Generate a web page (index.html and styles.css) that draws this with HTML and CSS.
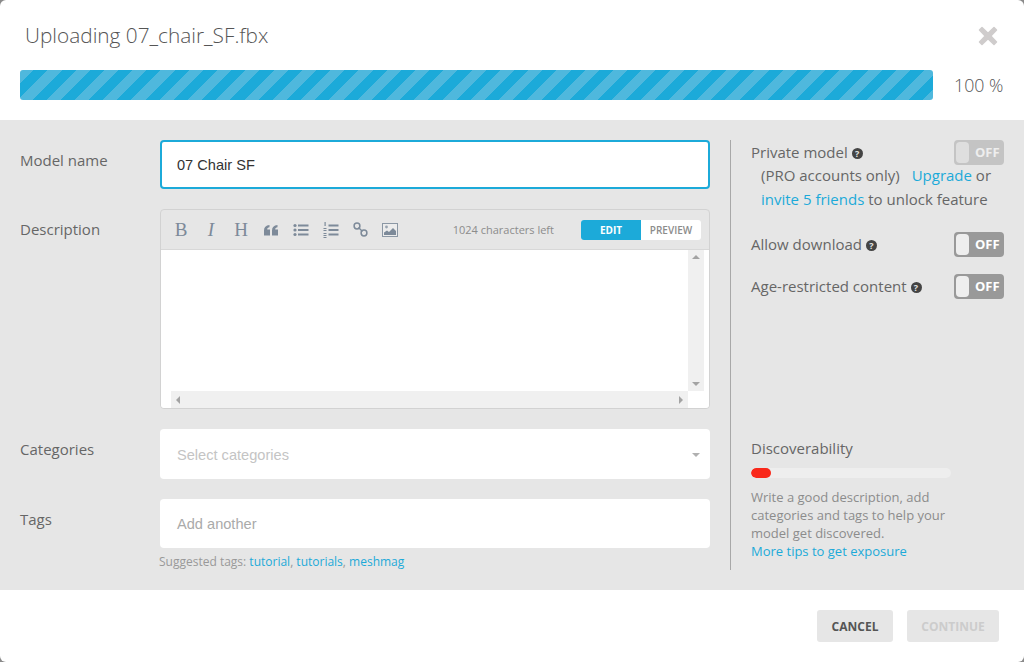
FILE: index.html
```html
<!DOCTYPE html>
<html lang="en">
<head>
<meta charset="utf-8">
<title>Upload</title>
<link rel="stylesheet" href="styles.css">
</head>
<body>
<div class="modal">
  <header class="head">
    <div class="title-row">
      <h1 class="title">Uploading 07_chair_SF.fbx</h1>
      <svg class="close" width="20" height="20" viewBox="0 0 20 20"><path d="M4 1.500 10 7.200 16 1.500 18.500 4 12.800 10 18.500 16 16 18.500 10 12.800 4 18.500 1.500 16 7.200 10 1.500 4Z" fill="#cfcccc" stroke="#cfcccc" stroke-width="1.500" stroke-linejoin="round"/></svg>
    </div>
    <div class="progress-row">
      <div class="progress"></div>
      <span class="percent">100 %</span>
    </div>
  </header>
  <main class="content">
    <section class="left">
      <div class="row row-name">
        <label class="label">Model name</label>
        <div class="name-input">07 Chair SF</div>
      </div>
      <div class="row row-desc">
        <label class="label">Description</label>
        <div class="editor">
          <div class="toolbar">
            <span class="tool tool-b">B</span>
            <span class="tool tool-i">I</span>
            <span class="tool tool-h">H</span>
            <svg class="ico" width="16" height="14" viewBox="0 0 16 14"><path d="M1 12.500V7.500C1 4.300 2.800 2.300 6.500 2V4.300C5 4.500 4.200 5.200 4.200 6.500H7V12.500ZM9 12.500V7.500C9 4.300 10.800 2.300 14.500 2V4.300C13 4.500 12.200 5.200 12.200 6.500H15V12.500Z" fill="#7d8a99"/></svg>
            <svg class="ico" width="16" height="14" viewBox="0 0 16 14"><g fill="#7d8a99"><circle cx="2" cy="2.500" r="1.600"/><circle cx="2" cy="7" r="1.600"/><circle cx="2" cy="11.500" r="1.600"/><rect x="5" y="1.500" width="10.500" height="2"/><rect x="5" y="6" width="10.500" height="2"/><rect x="5" y="10.500" width="10.500" height="2"/></g></svg>
            <svg class="ico" width="16" height="18" viewBox="0 0 16 18"><g fill="#7d8a99"><rect x="5.500" y="3.500" width="10" height="2"/><rect x="5.500" y="8" width="10" height="2"/><rect x="5.500" y="12.500" width="10" height="2"/><rect x="1.500" y="1" width="1.200" height="4"/><rect x="0.500" y="7" width="3" height="1"/><rect x="0.500" y="9" width="3" height="1"/><rect x="0.500" y="12" width="3" height="1"/><rect x="0.500" y="14" width="3" height="1"/><rect x="0.500" y="16" width="3" height="1"/></g></svg>
            <svg class="ico" width="15" height="15" viewBox="0 0 15 15"><g fill="none" stroke="#7d8a99" stroke-width="1.500"><circle cx="4" cy="4" r="2.900"/><circle cx="11" cy="11" r="2.900"/><path d="M5.500 5.500 9.500 9.500"/></g></svg>
            <svg class="ico" width="16" height="14" viewBox="0 0 16 14"><rect x="0.500" y="0.500" width="15" height="13" fill="#ececec" stroke="#8b97a4" stroke-width="1"/><path d="M2 12V9.500L5 7.500 7 9 11 5 14 8V12Z" fill="#7d8a99"/><circle cx="4.500" cy="4" r="1.400" fill="#98a3af"/></svg>
            <span class="chars">1024 characters left</span>
            <div class="switch"><span class="sw-edit">EDIT</span><span class="sw-preview">PREVIEW</span></div>
          </div>
          <div class="edit-area">
            <div class="edit-main">
              <div class="edit-text"></div>
              <div class="vscroll"><i class="arrow arrow-up"></i><i class="arrow arrow-down"></i></div>
            </div>
            <div class="hscroll-row">
              <div class="hscroll"><i class="arrow arrow-left"></i><i class="arrow arrow-right"></i></div>
            </div>
          </div>
        </div>
      </div>
      <div class="row row-cat">
        <label class="label">Categories</label>
        <div class="select"><span>Select categories</span><i class="select-arrow"></i></div>
      </div>
      <div class="row row-tags">
        <label class="label">Tags</label>
        <div class="tags-col">
          <div class="tags-input">Add another</div>
          <div class="suggest">Suggested tags: <a>tutorial</a>, <a>tutorials</a>, <a>meshmag</a></div>
        </div>
      </div>
    </section>
    <aside class="right">
      <div class="options">
        <div class="opt opt-private">
          <div class="opt-text">
            <div class="opt-title">Private model <span class="help">?</span></div>
            <div class="opt-note">(PRO accounts only) <a class="upgrade">Upgrade</a> or</div>
            <div class="opt-note opt-note2"><a>invite 5 friends</a> to unlock feature</div>
          </div>
          <div class="toggle toggle-dis"><i class="knob"></i><span>OFF</span></div>
        </div>
        <div class="opt opt-dl">
          <div class="opt-title">Allow download <span class="help">?</span></div>
          <div class="toggle"><i class="knob"></i><span>OFF</span></div>
        </div>
        <div class="opt opt-age">
          <div class="opt-title">Age-restricted content <span class="help">?</span></div>
          <div class="toggle"><i class="knob"></i><span>OFF</span></div>
        </div>
      </div>
      <div class="disc">
        <div class="disc-title">Discoverability</div>
        <div class="meter"><div class="meter-fill"></div></div>
        <p class="disc-text">Write a good description, add categories and tags to help your model get discovered.<br><a>More tips to get exposure</a></p>
      </div>
    </aside>
  </main>
  <footer class="foot">
    <button class="btn btn-cancel">CANCEL</button>
    <button class="btn btn-continue">CONTINUE</button>
  </footer>
</div>
</body>
</html>
```
FILE: styles.css
```css
* { box-sizing: border-box; }
html, body { margin: 0; padding: 0; height: 662px; background: #8a8a8a; overflow: hidden; }
body { font-family: "Open Sans", sans-serif; color: #666; }
a { color: #1caad9; }
.modal { width: 1024px; height: 662px; background: #fff; border-radius: 6px; overflow: hidden; display: flex; flex-direction: column; }
.head { height: 120px; padding: 0 20px; }
.title-row { height: 70px; display: flex; align-items: center; justify-content: space-between; padding: 1px 5px 0 5px; }
.title { margin: -1px 0 0; font-size: 20.800px; font-weight: 300; color: #555; line-height: 69px; }
.close { display: block; margin-right: 1px; }
.progress-row { display: flex; align-items: center; height: 30px; }
.progress { width: 913px; height: 30px; border-radius: 3px; background: repeating-linear-gradient(-45deg, #4fb8dd -2.900px, #4fb8dd 7.100px, #1caad9 7.100px, #1caad9 17.100px); }
.percent { margin-left: 21px; font-size: 17.800px; font-weight: 300; color: #555; }
.content { height: 470px; background: #e6e6e6; padding: 20px; display: flex; }
.left { width: 690px; display: flex; flex-direction: column; gap: 20px; }
.row { display: flex; }
.label { width: 140px; font-size: 15px; color: #666; line-height: 20px; padding-top: 10px; flex: none; }
.name-input { width: 550px; height: 49px; background: #fff; border: 2px solid #1caad9; border-radius: 4px; padding: 1px 15px 0; font: 14.600px/45px "Liberation Sans", sans-serif; color: #333; }
.editor { width: 550px; height: 200px; border: 1px solid #d2d2d2; border-radius: 4px; overflow: hidden; }
.toolbar { height: 40px; border-bottom: 1px solid #d8d8d8; display: flex; align-items: center; padding-left: 12px; position: relative; }
.tool { width: 16px; font: 19px/20px "Liberation Serif", serif; color: #7d8a99; text-align: center; margin-right: 14px; }
.tool-i { font-style: italic; }
.ico { margin-right: 14px; flex: none; }
.chars { margin-left: auto; font-size: 11px; color: #8c8c8c; margin-right: 27px; }
.switch { display: flex; width: 120px; height: 20px; margin-right: 8px; border-radius: 3px; overflow: hidden; background: #fff; }
.sw-edit { width: 60px; background: #1caad9; color: #fff; font-size: 10px; font-weight: 700; line-height: 20px; text-align: center; }
.sw-preview { width: 60px; color: #8c8c8c; font-size: 10px; font-weight: 600; line-height: 20px; text-align: center; }
.edit-area { background: #fff; height: 158px; display: flex; flex-direction: column; padding-right: 5px; }
.edit-main { display: flex; height: 141px; }
.edit-text { flex: 1; }
.vscroll { width: 16px; background: #f0f0f0; position: relative; }
.hscroll-row { height: 17px; padding-left: 10px; padding-right: 16px; }
.hscroll { height: 17px; background: #f0f0f0; position: relative; }
.arrow { position: absolute; width: 0; height: 0; border: 4px solid transparent; }
.arrow-up { left: 4px; top: 5px; border-bottom-color: #a3a3a3; border-top-width: 0; }
.arrow-down { left: 4px; bottom: 5px; border-top-color: #a3a3a3; border-bottom-width: 0; }
.arrow-left { left: 5px; top: 5px; border-right-color: #a3a3a3; border-left-width: 0; }
.arrow-right { right: 5px; top: 5px; border-left-color: #a3a3a3; border-right-width: 0; }
.select, .tags-input { width: 550px; background: #fff; border-radius: 4px; padding: 0 17px; font: 14.600px/50px "Liberation Sans", sans-serif; }
.select { height: 50px; color: #c4c4c4; display: flex; justify-content: space-between; align-items: center; padding-top: 1px; padding-right: 10px; }
.select-arrow { width: 0; height: 0; border: 4px solid transparent; border-top-color: #b0b0b0; border-bottom-width: 0; }
.tags-input { height: 49px; color: #aaa; line-height: 50px; }
.suggest { margin: 6px 0 0 -1px; font-size: 12px; line-height: 16px; color: #999; }
.right { margin-left: 20px; width: 274px; border-left: 1px solid #a8a8a8; padding-left: 20px; display: flex; flex-direction: column; justify-content: space-between; }
.opt { display: flex; justify-content: space-between; align-items: flex-start; }
.opt-title { font-size: 15px; color: #666; line-height: 24px; }
.opt-private .opt-title { line-height: 25px; margin-bottom: -2px; }
.opt-note { font-size: 15px; color: #666; line-height: 24px; padding-left: 10px; white-space: nowrap; }
.opt-text { width: 0; overflow: visible; flex: 1; }
.upgrade { margin-left: 8px; }
.opt-private { height: 92px; }
.opt-dl { height: 42px; }
.opt-dl .opt-title, .opt-age .opt-title { line-height: 25px; }
.help { display: inline-block; width: 11px; height: 11px; border-radius: 50%; background: #444; color: #e6e6e6; font-size: 9px; font-weight: 700; line-height: 11px; text-align: center; vertical-align: 1px; }
.toggle { width: 50px; height: 25px; border-radius: 4px; background: #999; display: flex; align-items: center; padding: 2px; flex: none; margin-left: auto; }
.toggle-dis { background: #c4c4c4; }
.knob { width: 13px; height: 21px; border-radius: 4px; background: #eee; flex: none; display: block; }
.toggle span { color: #fff; font-size: 13px; font-weight: 700; margin-left: 6px; line-height: 21px; }
.toggle-dis .knob { background: #dedede; }
.toggle-dis span { color: #eee; }
.disc { padding-bottom: 10px; }
.disc-title { font-size: 15px; color: #666; line-height: 20px; }
.meter { width: 200px; height: 10px; background: #eee; border-radius: 5px; margin-top: 10px; overflow: hidden; }
.meter-fill { width: 20px; height: 10px; background: #f9281a; border-radius: 5px; }
.disc-text { width: 210px; margin: 10px 0 0; font-size: 13px; line-height: 18px; color: #8c8c8c; }
.foot { height: 72px; display: flex; justify-content: flex-end; align-items: flex-start; padding: 20px 25px 0 0; gap: 14px; }
.btn { height: 32px; border: 0; border-radius: 3px; background: #e6e6e6; font-family: "Open Sans", sans-serif; font-size: 12px; font-weight: 700; padding: 0; }
.btn-cancel { width: 76px; color: #555; }
.btn-continue { width: 92px; color: #ccc; }
```
